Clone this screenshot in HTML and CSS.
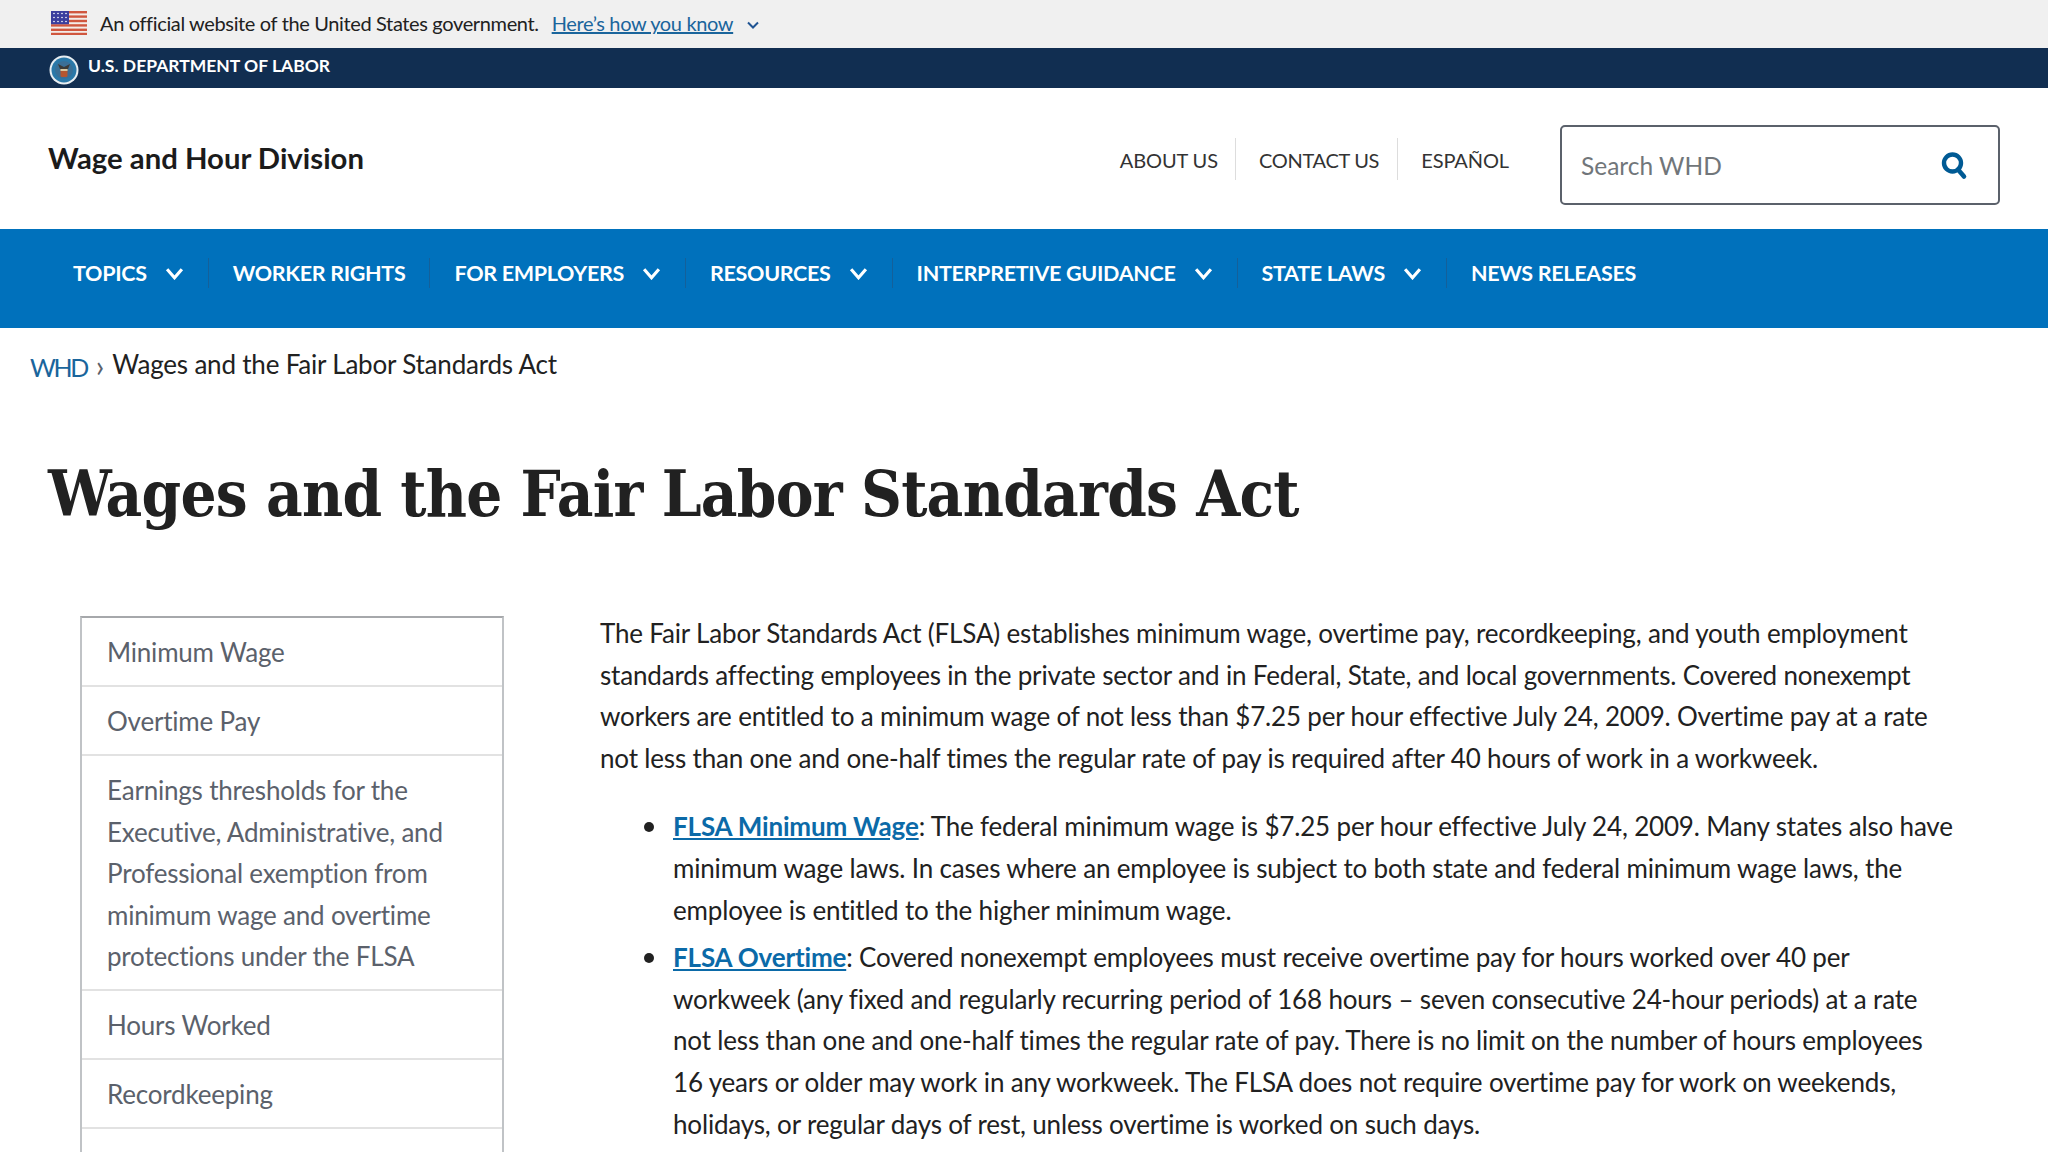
FILE: index.html
```html
<!DOCTYPE html>
<html lang="en">
<head>
  <meta charset="UTF-8">
  <meta name="viewport" content="width=device-width, initial-scale=1.0">
  <title>Wages and the Fair Labor Standards Act</title>
  <link rel="stylesheet" href="styles.css">
</head>
<body>
  <div class="gov-banner">
    <svg class="flag" width="36" height="24" viewBox="0 0 36 24">
      <rect width="36" height="24" fill="#f3ece8"/>
      <rect y="0" width="36" height="2.4" fill="#d0573f"/>
      <rect y="4.4" width="36" height="2.4" fill="#d0573f"/>
      <rect y="8.8" width="36" height="2.4" fill="#d0573f"/>
      <rect y="13.2" width="36" height="2.4" fill="#d0573f"/>
      <rect y="17.6" width="36" height="2.4" fill="#d0573f"/>
      <rect y="21.8" width="36" height="2.2" fill="#d0573f"/>
      <rect width="18" height="13.2" fill="#3b3f9e"/>
      <g fill="#fff">
        <circle cx="3" cy="2.5" r=".8"/><circle cx="7" cy="2.5" r=".8"/><circle cx="11" cy="2.5" r=".8"/><circle cx="15" cy="2.5" r=".8"/>
        <circle cx="3" cy="6.5" r=".8"/><circle cx="7" cy="6.5" r=".8"/><circle cx="11" cy="6.5" r=".8"/><circle cx="15" cy="6.5" r=".8"/>
        <circle cx="3" cy="10.5" r=".8"/><circle cx="7" cy="10.5" r=".8"/><circle cx="11" cy="10.5" r=".8"/><circle cx="15" cy="10.5" r=".8"/>
      </g>
    </svg>
    <span class="gov-text">An official website of the United States government.</span>
    <a class="gov-link" href="#">Here’s how you know</a>
    <svg class="gov-caret" width="14" height="10" viewBox="0 0 14 10"><path d="M2 2.5l5 5 5-5" fill="none" stroke="#205493" stroke-width="2"/></svg>
  </div>

  <div class="dept-bar">
    <svg class="seal" width="30" height="30" viewBox="0 0 30 30">
      <circle cx="15" cy="15" r="14.5" fill="#e8eef2"/>
      <circle cx="15" cy="15" r="12.5" fill="#2a78a8"/>
      <circle cx="15" cy="15" r="9" fill="#3a6f96"/>
      <path d="M9 9l6 3 6-3-2 5h-8z" fill="#3b3a36"/>
      <rect x="11.5" y="14" width="7" height="8" rx="1.5" fill="#b5562f"/>
      <rect x="11.5" y="14" width="7" height="2" fill="#d9c9a0"/>
    </svg>
    <span>U.S. DEPARTMENT OF LABOR</span>
  </div>

  <header class="site-header">
    <a class="site-name" href="#">Wage and Hour Division</a>
    <nav class="util-nav">
      <a href="#">ABOUT US</a>
      <a href="#">CONTACT US</a>
      <a href="#">ESPAÑOL</a>
    </nav>
    <div class="search">
      <span class="search-text">Search WHD</span>
      <svg width="28" height="30" viewBox="0 0 28 30"><circle cx="12.5" cy="13" r="8.5" fill="none" stroke="#005a94" stroke-width="4.4"/><path d="M18 19.5l6 7" stroke="#005a94" stroke-width="4.6" stroke-linecap="round"/></svg>
    </div>
  </header>

  <nav class="main-nav">
    <a class="nav-item" href="#">TOPICS <svg class="chev" viewBox="0 0 18 12"><path d="M2 2l7 8 7-8" /></svg></a>
    <a class="nav-item" href="#">WORKER RIGHTS</a>
    <a class="nav-item" href="#">FOR EMPLOYERS <svg class="chev" viewBox="0 0 18 12"><path d="M2 2l7 8 7-8" /></svg></a>
    <a class="nav-item" href="#">RESOURCES <svg class="chev" viewBox="0 0 18 12"><path d="M2 2l7 8 7-8" /></svg></a>
    <a class="nav-item" href="#">INTERPRETIVE GUIDANCE <svg class="chev" viewBox="0 0 18 12"><path d="M2 2l7 8 7-8" /></svg></a>
    <a class="nav-item" href="#">STATE LAWS <svg class="chev" viewBox="0 0 18 12"><path d="M2 2l7 8 7-8" /></svg></a>
    <a class="nav-item" href="#">NEWS RELEASES</a>
  </nav>

  <div class="breadcrumb">
    <a href="#">WHD</a>
    <span class="crumb-sep">›</span>
    <span class="crumb-current">Wages and the Fair Labor Standards Act</span>
  </div>

  <h1>Wages and the Fair Labor Standards Act</h1>

  <div class="content">
    <ul class="side-menu">
      <li>Minimum Wage</li>
      <li>Overtime Pay</li>
      <li>Earnings thresholds for the<br>Executive, Administrative, and<br>Professional exemption from<br>minimum wage and overtime<br>protections under the FLSA</li>
      <li>Hours Worked</li>
      <li>Recordkeeping</li>
    </ul>
    <div class="article">
      <p>The Fair Labor Standards Act (FLSA) establishes minimum wage, overtime pay, recordkeeping, and youth employment<br>standards affecting employees in the private sector and in Federal, State, and local governments. Covered nonexempt<br>workers are entitled to a minimum wage of not less than $7.25 per hour effective July 24, 2009. Overtime pay at a rate<br>not less than one and one-half times the regular rate of pay is required after 40 hours of work in a workweek.</p>
      <ul class="bullets">
        <li><a href="#">FLSA Minimum Wage</a>: The federal minimum wage is $7.25 per hour effective July 24, 2009. Many states also have<br>minimum wage laws. In cases where an employee is subject to both state and federal minimum wage laws, the<br>employee is entitled to the higher minimum wage.</li>
        <li><a href="#">FLSA Overtime</a>: Covered nonexempt employees must receive overtime pay for hours worked over 40 per<br>workweek (any fixed and regularly recurring period of 168 hours – seven consecutive 24-hour periods) at a rate<br>not less than one and one-half times the regular rate of pay. There is no limit on the number of hours employees<br>16 years or older may work in any workweek. The FLSA does not require overtime pay for work on weekends,<br>holidays, or regular days of rest, unless overtime is worked on such days.</li>
      </ul>
    </div>
  </div>
</body>
</html>
```

FILE: styles.css
```css
html, body {
  height: 1152px;
  overflow: hidden;
}
body {
  margin: 0;
  font-family: 'Lato', 'Open Sans', sans-serif;
  color: #212121;
  background: #fff;
}
a {
  color: inherit;
  text-decoration: none;
}

.gov-banner {
  height: 48px;
  background: #f0f0f0;
  display: flex;
  align-items: center;
  padding-left: 51px;
  font-size: 20px;
  padding-bottom: 2px;
  box-sizing: border-box;
}
.flag {
  margin-right: 13px;
}
.gov-text {
  letter-spacing: -0.36px;
}
.gov-link {
  color: #1a659c;
  text-decoration: underline;
  margin-left: 13px;
  letter-spacing: -0.36px;
}
.gov-caret {
  margin-left: 13px;
  margin-top: 3px;
}

.dept-bar {
  height: 40px;
  box-sizing: border-box;
  background: #112e51;
  color: #fff;
  display: flex;
  padding-left: 49px;
  font-size: 17.5px;
  font-weight: 700;
  line-height: 36px;
}
.seal {
  margin: 7px 9px 0 0;
}

.site-header {
  height: 141px;
  box-sizing: border-box;
  display: flex;
  align-items: flex-start;
  padding: 37px 48px 0;
}
.site-name {
  font-size: 29.3px;
  font-weight: 700;
  line-height: 46px;
  color: #1b1b1b;
  margin: 10px auto 0 0;
}
.util-nav {
  display: flex;
  margin-top: 13px;
  font-size: 20px;
  line-height: 40px;
  color: #333;
  margin-right: 51px;
}
.util-nav a {
  padding: 2px 17px 0;
  border-left: 1px solid #ddd;
  letter-spacing: -0.1px;
}
.util-nav a:first-child {
  border-left: none;
}
.util-nav a:nth-child(2) {
  padding: 2px 18px 0 23px;
  letter-spacing: -0.3px;
}
.util-nav a:last-child {
  padding-right: 0;
  padding-left: 23px;
}
.search {
  width: 440px;
  height: 80px;
  box-sizing: border-box;
  border: 2px solid #5b616b;
  border-radius: 5px;
  display: flex;
  align-items: center;
  justify-content: space-between;
  padding: 0 30px 0 19px;
}
.search-text {
  font-size: 24.5px;
  color: #71767a;
}

.main-nav {
  height: 99px;
  box-sizing: border-box;
  background: #0071bc;
  display: flex;
  align-items: flex-start;
  padding: 29px 0 0 49px;
  color: #fff;
}
.nav-item {
  display: flex;
  align-items: center;
  height: 30px;
  padding: 0 24px;
  font-size: 21.5px;
  font-weight: 700;
  letter-spacing: -0.3px;
  border-left: 1px solid #14609a;
}
.nav-item:first-child {
  border-left: none;
}
.chev {
  width: 19px;
  height: 13px;
  margin-left: 18px;
  fill: none;
  stroke: #fff;
  stroke-width: 3;
}

.breadcrumb {
  display: flex;
  align-items: baseline;
  padding: 21px 0 0 30px;
  font-size: 26px;
  line-height: 36px;
}
.breadcrumb a {
  color: #1a659c;
  font-size: 25px;
  letter-spacing: -2.4px;
}
.crumb-sep {
  margin: 0 8px 0 9px;
  color: #5b616b;
  font-size: 30px;
  line-height: 20px;
}
.crumb-current {
  position: relative;
  top: -3px;
  letter-spacing: -0.2px;
}

h1 {
  margin: 66px 0 0 48px;
  font-family: 'DejaVu Serif Condensed', 'DejaVu Serif', 'Liberation Serif', serif;
  font-size: 63px;
  line-height: 86px;
  font-weight: 700;
  color: #212121;
  letter-spacing: -0.72px;
}

.content {
  display: flex;
  padding: 79px 0 0 80px;
  font-size: 26px;
  line-height: 41.6px;
}
.side-menu {
  list-style: none;
  margin: 0;
  padding: 0;
  width: 424px;
  min-height: 560px;
  box-sizing: border-box;
  border: 2px solid #c0c3c6;
  border-top-color: #a6a8ab;
  border-bottom: none;
  flex-shrink: 0;
  color: #5b616b;
  letter-spacing: -0.2px;
  align-self: flex-start;
}
.side-menu li {
  padding: 14px 25px 11.4px;
  border-bottom: 2px solid #e2e2e2;
}
.article {
  margin-left: 96px;
  margin-top: -3px;
  white-space: nowrap;
  letter-spacing: -0.17px;
}
.article p {
  margin: 0 0 27px;
}
.bullets {
  list-style: none;
  margin: 0;
  padding-left: 73px;
}
.bullets li {
  position: relative;
  margin-bottom: 6px;
}
.bullets li::before {
  content: "";
  position: absolute;
  left: -29px;
  top: 16px;
  width: 10px;
  height: 10px;
  border-radius: 50%;
  background: #212121;
}
.bullets a {
  color: #0b6aa8;
  font-weight: 700;
  text-decoration: underline;
}
```
